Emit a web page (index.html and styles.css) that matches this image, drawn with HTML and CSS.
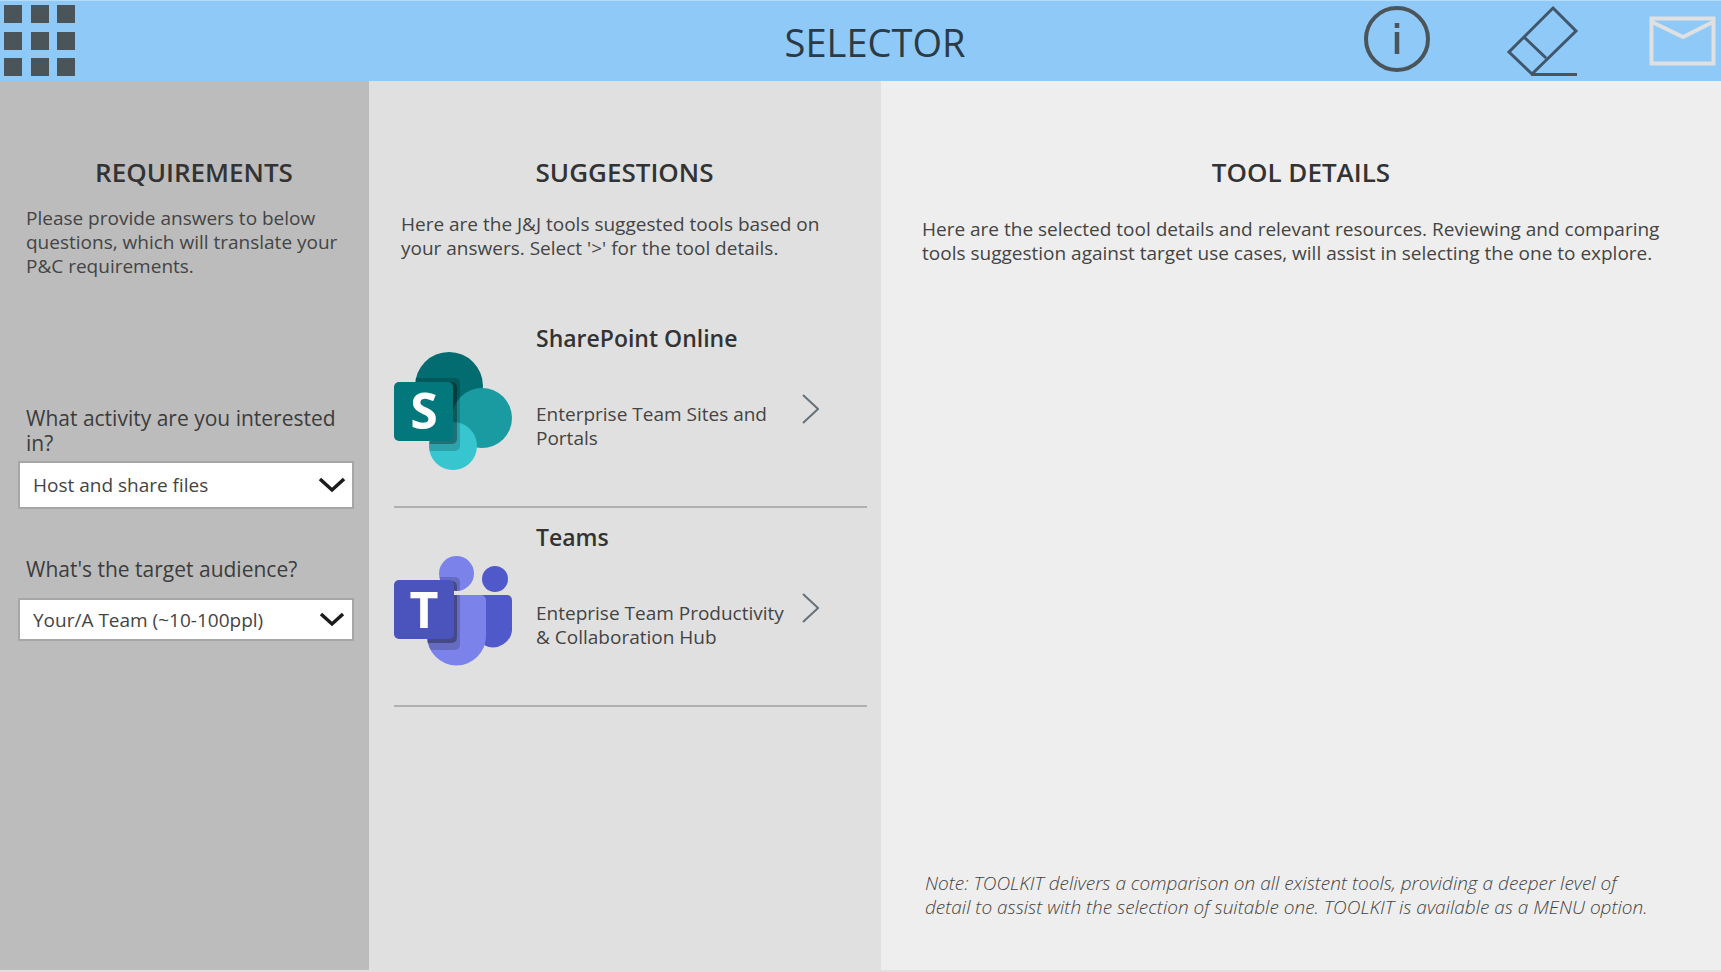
FILE: index.html
```html
<!DOCTYPE html>
<html lang="en">
<head>
<meta charset="utf-8">
<title>Selector</title>
<link rel="stylesheet" href="styles.css">
</head>
<body>
<header class="topbar">
  <button class="icon-button menu" type="button" aria-label="Menu">
    <svg width="72" height="72" viewBox="0 0 72 72" fill="#4a5459">
      <path d="M0 0h18v18H0zM27 0h18v18H27zM53 0h18v18H53zM0 27h18v18H0zM27 27h18v18H27zM53 27h18v18H53zM0 53h18v18H0zM27 53h18v18H27zM53 53h18v18H53z"/>
    </svg>
  </button>
  <h1 class="title">SELECTOR</h1>
  <nav class="actions" aria-label="Actions">
    <button class="icon-button" type="button" aria-label="Information">
      <svg width="68" height="72" viewBox="0 0 68 72" fill="none" stroke="#4a5459">
        <circle cx="34" cy="34" r="31" stroke-width="4"/>
        <path d="M34 18v5M34 27v22" stroke-width="4.500"/>
      </svg>
    </button>
    <button class="icon-button" type="button" aria-label="Clear answers">
      <svg class="eraser" width="72" height="72" viewBox="-3 0 72 72" fill="none" stroke="#40566a" stroke-width="3">
        <path d="M46 3 69 26 25 69 2 47zM17 32l22 21"/>
        <path d="M24 69.500h46" stroke="#4a5459"/>
      </svg>
    </button>
    <button class="icon-button" type="button" aria-label="Send mail">
      <svg width="67" height="72" viewBox="0 0 67 72" fill="none" stroke="#dfe0e1" stroke-width="4">
        <path d="M2.500 13.500h62v45h-62zM3 17l31 15 30-15"/>
      </svg>
    </button>
  </nav>
</header>
<main class="columns">
  <section class="panel requirements">
    <h2 class="heading">REQUIREMENTS</h2>
    <p class="intro">Please provide answers to below questions, which will translate your P&amp;C requirements.</p>
    <div class="questions">
      <label class="question" for="activity">What activity are you interested in?</label>
      <div class="picker">
        <select class="select" id="activity"><option>Host and share files</option></select>
        <svg class="caret" width="26" height="16" viewBox="0 0 26 16" fill="none" stroke="#1c1c1c" stroke-width="3.500"><path d="M1 2l12 11L25 2"/></svg>
      </div>
      <label class="question" for="audience">What's the target audience?</label>
      <div class="picker picker-short">
        <select class="select" id="audience"><option>Your/A Team (~10-100ppl)</option></select>
        <svg class="caret" width="26" height="16" viewBox="0 0 26 16" fill="none" stroke="#1c1c1c" stroke-width="3.500"><path d="M2 2l11 10L24 2"/></svg>
      </div>
    </div>
  </section>
  <section class="panel suggestions">
    <h2 class="heading">SUGGESTIONS</h2>
    <p class="intro">Here are the J&amp;J tools suggested tools based on your answers. Select '&gt;' for the tool details.</p>
    <ul class="tools">
      <li class="tool">
        <svg class="logo" width="118" height="118" viewBox="0 0 118 118">
          <defs><clipPath id="sp"><circle cx="55" cy="34" r="34"/><circle cx="88" cy="66" r="30"/><circle cx="59" cy="94" r="24"/></clipPath></defs>
          <circle cx="55" cy="34" r="34" fill="#036c70"/>
          <circle cx="88" cy="66" r="30" fill="#1a9ba1"/>
          <circle cx="59" cy="94" r="24" fill="#37c6d0"/>
          <g clip-path="url(#sp)"><rect x="8" y="26" width="58" height="73" rx="5" fill="#000" opacity=".18"/><rect x="6" y="30" width="57" height="62" rx="5" fill="#000" opacity=".3"/></g>
          <rect y="30" width="59" height="59" rx="5" fill="#03787c"/>
          <text class="logo-letter" x="30" y="77" text-anchor="middle">S</text>
        </svg>
        <div class="tool-text">
          <h3 class="tool-name">SharePoint Online</h3>
          <p class="tool-desc">Enterprise Team Sites and Portals</p>
        </div>
        <button class="icon-button open" type="button" aria-label="Open SharePoint Online details">
          <svg width="18" height="32" viewBox="0 0 18 32" fill="none" stroke="#66717a" stroke-width="2"><path d="M2 2l15 14L2 30"/></svg>
        </button>
      </li>
      <li class="tool">
        <svg class="logo" width="118" height="118" viewBox="0 0 118 118">
          <defs><clipPath id="tm"><circle cx="62.500" cy="22.500" r="17.500"/><path d="M33 44h54a5 5 0 0 1 5 5V85a29 29 0 0 1-59 0z"/></clipPath></defs>
          <circle cx="101" cy="28" r="13" fill="#5059c9"/>
          <path d="M85 44h28a5 5 0 0 1 5 5V76a19 19 0 0 1-28 18z" fill="#5059c9"/>
          <circle cx="62.500" cy="22.500" r="17.500" fill="#7b83eb"/>
          <path d="M33 44h54a5 5 0 0 1 5 5V85a29 29 0 0 1-59 0z" fill="#7b83eb"/>
          <g clip-path="url(#tm)"><rect x="8" y="26" width="58" height="73" rx="5" fill="#000" opacity=".18"/><rect x="6" y="30" width="57" height="62" rx="5" fill="#000" opacity=".3"/></g>
          <rect y="29" width="60" height="59" rx="5" fill="#4b53bc"/>
          <text class="logo-letter" x="30" y="77" text-anchor="middle">T</text>
        </svg>
        <div class="tool-text">
          <h3 class="tool-name">Teams</h3>
          <p class="tool-desc">Enteprise Team Productivity &amp; Collaboration Hub</p>
        </div>
        <button class="icon-button open" type="button" aria-label="Open Teams details">
          <svg width="18" height="32" viewBox="0 0 18 32" fill="none" stroke="#66717a" stroke-width="2"><path d="M2 2l15 14L2 30"/></svg>
        </button>
      </li>
    </ul>
  </section>
  <section class="panel details">
    <h2 class="heading">TOOL DETAILS</h2>
    <p class="intro">Here are the selected tool details and relevant resources. Reviewing and comparing tools suggestion against target use cases, will assist in selecting the one to explore.</p>
    <p class="note">Note: TOOLKIT delivers a comparison on all existent tools, providing a deeper level of detail to assist with the selection of suitable one. TOOLKIT is available as a MENU option.</p>
  </section>
</main>
</body>
</html>
```
FILE: styles.css
```css
* { box-sizing: border-box; }

body {
  margin: 0;
  min-height: 100vh;
  display: flex;
  flex-direction: column;
  font-family: "Open Sans", "Noto Sans", sans-serif;
  font-size: 19px;
  line-height: 24px;
  color: #444;
  background: #e0e0e0;
}

h1, h2, h3, p, ul { margin: 0; padding: 0; }

.icon-button {
  display: block;
  padding: 0;
  border: 0;
  background: none;
  cursor: pointer;
}
.icon-button svg { display: block; }

.topbar {
  display: grid;
  grid-template-columns: 1fr auto 1fr;
  align-items: center;
  padding: 4px 5px 4px 4px;
  border-top: 1px solid #b5dcfa;
  background: #8fc9f8;
}
.menu { justify-self: start; }
.title {
  padding: 2px 0 0 30px;
  font-size: 38px;
  font-weight: 400;
  line-height: 70px;
  color: #2b3a45;
}
.actions { display: flex; justify-content: flex-end; gap: 73px; }
.eraser { overflow: visible; }

.columns {
  flex: 1;
  display: grid;
  grid-template-columns: 369fr 512fr 840fr;
  margin-bottom: 2px;
}
.panel { display: flex; flex-direction: column; padding-top: 75px; }
.requirements { padding-left: 18px; padding-right: 15px; background: #bcbcbc; }
.suggestions { padding-left: 25px; padding-right: 14px; background: #e0e0e0; }
.details { padding-left: 41px; padding-right: 41px; background: #eee; }

.heading {
  font-size: 26px;
  font-weight: 600;
  line-height: 32px;
  text-align: center;
  color: #333;
}

.requirements .heading { padding-left: 16px; }
.requirements .intro { margin-top: 18px; padding-left: 8px; }
.suggestions .heading { padding-right: 12px; }
.suggestions .intro { margin-top: 24px; padding-left: 7px; padding-right: 16px; }
.details .intro { margin-top: 29px; }

.questions { margin-top: 128px; }
.question {
  display: block;
  padding-left: 8px;
  padding-right: 8px;
  font-size: 21px;
  line-height: 25px;
  color: #3c3c3c;
}
.picker { position: relative; height: 48px; margin: 5px 0 48px; }
.picker-short { height: 43px; margin: 16px 0 0; }
.select {
  appearance: none;
  width: 100%;
  height: 100%;
  padding: 0 44px 0 13px;
  border: 2px solid #a6a6a6;
  border-radius: 0;
  background: #fff;
  font: inherit;
  color: #444;
}
.caret {
  position: absolute;
  right: 9px;
  top: 50%;
  margin-top: -8px;
  pointer-events: none;
}

.tools { margin-top: 49px; list-style: none; }
.tool {
  display: grid;
  grid-template-columns: 118px 1fr 18px;
  height: 199px;
  padding-right: 48px;
  border-bottom: 2px solid #b0b0b0;
}
.logo { margin-top: 43px; }
.logo-letter {
  font-family: "Open Sans", sans-serif;
  font-size: 50px;
  font-weight: 700;
  fill: #fff;
}
.tool-text { padding-left: 24px; }
.tool-name {
  margin-top: 13px;
  font-size: 23px;
  font-weight: 600;
  line-height: 32px;
  color: #333;
}
.tool-desc { margin-top: 48px; }
.open { align-self: start; margin-top: 84px; }

.note {
  margin-top: auto;
  padding-left: 3px;
  padding-right: 32px;
  padding-bottom: 51px;
  font-style: italic;
  font-weight: 300;
}
```
